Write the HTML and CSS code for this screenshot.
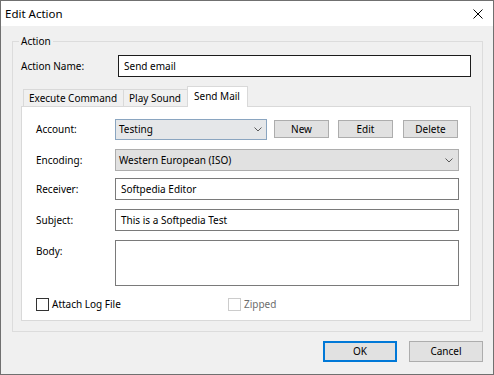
FILE: index.html
```html
<!DOCTYPE html>
<html>
<head>
<meta charset="utf-8">
<title>Edit Action</title>
<link rel="stylesheet" href="styles.css">
</head>
<body>
<div class="window">
  <div class="titlebar">
    <span class="title">Edit Action</span>
    <svg class="close" width="10" height="10" viewBox="0 0 10 10"><path d="M0.5 0.5L9.5 9.5M9.5 0.5L0.5 9.5" stroke="#000" stroke-width="1" fill="none"/></svg>
  </div>
  <div class="client">
    <div class="group">
      <span class="legend">Action</span>
      <div class="name-row">
        <span class="name-label">Action Name:</span>
        <div class="edit edit-focus">Send email</div>
      </div>
      <div class="tabs">
        <div class="tab tab-exec">Execute Command</div>
        <div class="tab tab-play">Play Sound</div>
        <div class="tab tab-active">Send Mail</div>
      </div>
      <div class="panel">
        <div class="row row-account">
          <span class="lbl">Account:</span>
          <div class="combo combo-hot combo-account"><span>Testing</span><svg class="chev" width="8" height="5" viewBox="0 0 8 5"><path d="M0.5 0.5L4 4L7.5 0.5" stroke="#5a5a5a" fill="none"/></svg></div>
          <div class="btn btn-small btn-new">New</div>
          <div class="btn btn-small btn-edit">Edit</div>
          <div class="btn btn-small btn-delete">Delete</div>
        </div>
        <div class="row row-encoding">
          <span class="lbl">Encoding:</span>
          <div class="combo combo-wide"><span>Western European (ISO)</span><svg class="chev" width="8" height="5" viewBox="0 0 8 5"><path d="M0.5 0.5L4 4L7.5 0.5" stroke="#5a5a5a" fill="none"/></svg></div>
        </div>
        <div class="row row-receiver">
          <span class="lbl">Receiver:</span>
          <div class="edit">Softpedia Editor</div>
        </div>
        <div class="row row-subject">
          <span class="lbl">Subject:</span>
          <div class="edit">This is a Softpedia Test</div>
        </div>
        <div class="row row-body">
          <span class="lbl lbl-top">Body:</span>
          <div class="edit edit-multi"></div>
        </div>
        <div class="row row-checks">
          <div class="checkitem checkitem-first"><span class="check"></span><span>Attach Log File</span></div>
          <div class="checkitem checkitem-disabled"><span class="check check-disabled"></span><span>Zipped</span></div>
        </div>
      </div>
    </div>
    <div class="footer">
      <div class="btn btn-dlg btn-default">OK</div>
      <div class="btn btn-dlg">Cancel</div>
    </div>
  </div>
</div>
</body>
</html>
```

FILE: styles.css
```css
* { box-sizing: border-box; }
html, body { margin: 0; padding: 0; }
body {
  width: 494px;
  height: 375px;
  overflow: hidden;
  font-family: "Noto Sans", "Open Sans", sans-serif;
  font-size: 10px;
  line-height: 13px;
  color: #000;
  background: #fff;
}
.window {
  width: 494px;
  height: 375px;
  border: 1px solid #707070;
  display: flex;
  flex-direction: column;
  background: #f0f0f0;
}
.titlebar {
  flex: none;
  height: 25px;
  background: #fff;
  display: flex;
  align-items: center;
  justify-content: space-between;
  padding: 0 10px 0 4px;
}
.title { font-size: 11.5px; line-height: 14px; }
.close { display: block; }
.client {
  flex: 1;
  display: flex;
  flex-direction: column;
  padding: 15px 10px 0 11px;
}
.group {
  position: relative;
  height: 291px;
  border: 1px solid #dcdcdc;
  padding: 13px 11px 0 8px;
}
.legend {
  position: absolute;
  top: -8px;
  left: 6px;
  padding: 0 2px;
  background: #f0f0f0;
  line-height: 14px;
}
.name-row { display: flex; align-items: center; height: 22px; }
.name-label { width: 97px; flex: none; }
.edit {
  flex: 1;
  height: 22px;
  border: 1px solid #7a7a7a;
  background: #fff;
  padding-left: 5px;
  display: flex;
  align-items: center;
  white-space: nowrap;
}
.edit-focus { border-color: #1c1c1c; }
.edit-multi { height: 46px; }
.tabs {
  position: relative;
  z-index: 1;
  display: flex;
  align-items: flex-end;
  height: 20px;
  margin: 9px 0 0 2px;
}
.tab {
  flex: none;
  height: 17px;
  border: 1px solid #d9d9d9;
  border-bottom: none;
  background: #f0f0f0;
  padding-left: 5px;
  line-height: 16px;
  white-space: nowrap;
}
.tab-exec { width: 101px; }
.tab-play { width: 65px; margin-left: -1px; }
.tab-active {
  width: 61px;
  height: 21px;
  margin-left: -1px;
  margin-bottom: -1px;
  padding-left: 6px;
  background: #fff;
  line-height: 18px;
}
.panel {
  height: 215px;
  border: 1px solid #d9d9d9;
  background: #fff;
  padding: 12px 11px 0 14px;
  display: flex;
  flex-direction: column;
}
.row { display: flex; align-items: center; }
.lbl { width: 79px; flex: none; }
.lbl-top { align-self: flex-start; margin-top: 5px; }
.row-account { height: 21px; align-items: flex-start; }
.row-account .lbl { line-height: 21px; }
.row-encoding { margin-top: 9px; }
.row-receiver { margin-top: 7px; }
.row-subject { margin-top: 9px; }
.row-body { margin-top: 9px; align-items: flex-start; }
.row-checks { margin-top: 12px; height: 13px; }
.combo {
  height: 22px;
  border: 1px solid #adadad;
  background: #e1e1e1;
  display: flex;
  align-items: center;
  justify-content: space-between;
  padding: 0 4px 0 3px;
  white-space: nowrap;
}
.combo-hot { border-color: #8aa5c0; background: #e5e7e9; }
.combo-account { width: 152px; height: 21px; }
.combo-wide { flex: 1; padding-right: 5px; }
.chev { display: block; flex: none; }
.btn {
  border: 1px solid #adadad;
  background: #e1e1e1;
  display: flex;
  align-items: center;
  justify-content: center;
  white-space: nowrap;
}
.btn-small { width: 55px; height: 18px; margin-top: 1px; }
.btn-new { margin-left: 7px; }
.btn-edit { margin-left: 9px; }
.btn-delete { margin-left: 10px; }
.checkitem { display: flex; align-items: center; gap: 3px; }
.checkitem-first { width: 192px; }
.checkitem-disabled { color: #6d6d6d; }
.check {
  width: 13px;
  height: 13px;
  border: 1px solid #333;
  background: #fff;
  flex: none;
}
.check-disabled { border-color: #cccccc; }
.footer {
  display: flex;
  justify-content: flex-end;
  gap: 12px;
  margin-top: 9px;
}
.btn-dlg { width: 74px; height: 21px; }
.btn-default { border: 2px solid #0078d7; }
```
